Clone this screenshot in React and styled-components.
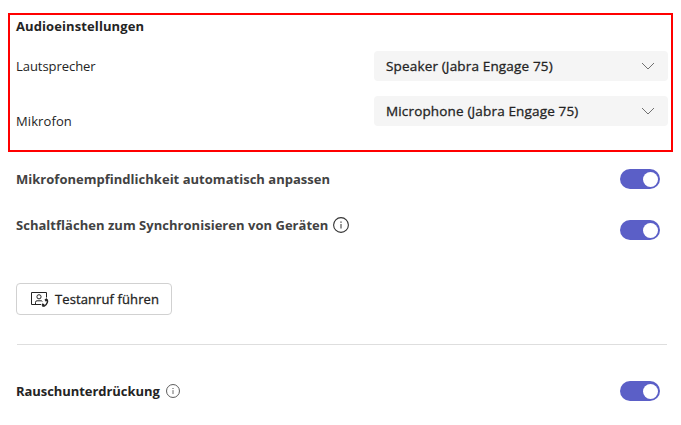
import React, { useState } from "react";
import styled, { createGlobalStyle } from "styled-components";

const GlobalStyle = createGlobalStyle`
	* {
		box-sizing: border-box;
	}
	body {
		margin: 0;
		background: #fff;
		color: #242424;
		font-family: "Open Sans", "Noto Sans", sans-serif;
		font-size: 13px;
		line-height: 20px;
	}
	button {
		font: inherit;
		color: inherit;
	}
`;

const Page = styled("main")`
	width: 681px;
	height: 425px;
	padding: 13px 8px 0;
	overflow: hidden;
`;

const AudioPanel = styled("section")`
	width: 665px;
	height: 139px;
	padding: 1px 3px 0 6px;
	border: 2px solid #f00;
`;

const Text = styled("span")`
	display: block;
	white-space: nowrap;
	font-size: ${props => props.$size || 13}px;
	font-weight: ${props => props.$weight || 400};
	color: ${props => props.$color || "#242424"};
	letter-spacing: ${props => props.$spacing || 0}px;
`;

const MediumText = styled(Text)`
	-webkit-text-stroke: 0.3px currentColor;
`;

const DeviceGrid = styled("div")`
	display: grid;
	grid-template-columns: 358px 294px;
	grid-template-rows: 30px 30px;
	row-gap: 15px;
	margin-top: 15px;
`;

const DeviceLabel = styled("div")`
	padding-top: ${props => props.$top}px;
`;

const Select = styled("button")`
	display: flex;
	align-items: center;
	justify-content: space-between;
	height: 30px;
	padding: 0 13px 0 12px;
	border: 0;
	border-radius: 4px;
	background: #f5f5f5;
`;

const SettingRow = styled("div")`
	display: flex;
	align-items: flex-start;
	justify-content: space-between;
	height: 20px;
	margin-top: ${props => props.$gap}px;
	padding: 0 13px 0 8px;
`;

const SettingName = styled("div")`
	display: flex;
	align-items: center;
	gap: ${props => props.$gap || 0}px;
	height: 20px;
	margin-top: ${props => props.$shift || 0}px;
`;

const Switch = styled("button")`
	display: flex;
	align-items: center;
	justify-content: ${props => (props.$on ? "flex-end" : "flex-start")};
	width: 40px;
	height: 20px;
	padding: 0 2px;
	border: 0;
	border-radius: 10px;
	background: ${props => (props.$on ? "#5b5fc7" : "#8a8a8a")};
`;

const Knob = styled("span")`
	width: 15px;
	height: 15px;
	border-radius: 50%;
	background: #fff;
`;

const CallButton = styled("button")`
	display: flex;
	align-items: center;
	gap: 6px;
	width: 156px;
	height: 32px;
	margin: 43px 0 0 8px;
	padding: 0 0 0 14px;
	border: 1px solid #d1d1d1;
	border-radius: 4px;
	background: #fff;
`;

const Divider = styled("hr")`
	width: 650px;
	height: 1px;
	margin: 29px 0 0 9px;
	border: 0;
	background: #dedede;
`;

const Icon = styled("svg")`
	display: block;
	flex: none;
	fill: none;
`;

const Chevron = () => (
	<Icon width="14" height="8" viewBox="0 0 14 8" stroke="#707070" strokeWidth="1">
		<path d="M1 1l6 6 6-6" />
	</Icon>
);

const InfoIcon = ({ size, color }) => (
	<Icon width={size} height={size} viewBox="0 0 16 16" stroke={color}>
		<circle cx="8" cy="8" r="7.4" strokeWidth="1.1" />
		<path d="M8 7v4.5" />
		<path d="M8 4.5v1.2" strokeWidth="1.2" />
	</Icon>
);

const TestCallIcon = () => (
	<Icon width="18" height="17" viewBox="0 0 18 17" stroke="#242424">
		<path d="M10 13.5H.5v-12h15v5" />
		<circle cx="8" cy="5.8" r="2.1" />
		<path d="M4.5 13.3v-2q0-1.5 1.5-1.5h4q1 0 1.4.7" />
		<path d="M15 8q2.2 1 1.3 3.5-.9 2.6-3 3.5-1.2.4-1.8-.5" strokeWidth="1.4" />
		<path d="M14.4 8l1.4 2M11 13.2l2 1.3" strokeWidth="2.2" />
	</Icon>
);

const Toggle = ({ label }) => {
	const [on, setOn] = useState(true);
	return (
		<Switch $on={on} role="switch" aria-checked={on} aria-label={label} onClick={() => setOn(!on)}>
			<Knob />
		</Switch>
	);
};

const App = () => (
	<Page>
		<GlobalStyle />
		<AudioPanel>
			<Text $weight={700} $spacing={0.1}>Audioeinstellungen</Text>
			<DeviceGrid>
				<DeviceLabel $top={5}>
					<Text $spacing={-0.05}>Lautsprecher</Text>
				</DeviceLabel>
				<Select>
					<MediumText $size={13.5} $spacing={0.16}>Speaker (Jabra Engage 75)</MediumText>
					<Chevron />
				</Select>
				<DeviceLabel $top={15}>
					<Text $spacing={0.1}>Mikrofon</Text>
				</DeviceLabel>
				<Select>
					<MediumText $size={13.5} $spacing={0.16}>Microphone (Jabra Engage 75)</MediumText>
					<Chevron />
				</Select>
			</DeviceGrid>
		</AudioPanel>
		<SettingRow $gap={17}>
			<SettingName>
				<Text $weight={700} $color="#424242" $spacing={0.02}>Mikrofonempfindlichkeit automatisch anpassen</Text>
			</SettingName>
			<Toggle label="Mikrofonempfindlichkeit" />
		</SettingRow>
		<SettingRow $gap={31}>
			<SettingName $gap={5} $shift={-5}>
				<Text $weight={700} $color="#424242" $spacing={0.03}>Schaltflächen zum Synchronisieren von Geräten</Text>
				<InfoIcon size={16} color="#333" />
			</SettingName>
			<Toggle label="Synchronisieren" />
		</SettingRow>
		<CallButton>
			<TestCallIcon />
			<MediumText $spacing={0.1}>Testanruf führen</MediumText>
		</CallButton>
		<Divider />
		<SettingRow $gap={36}>
			<SettingName $gap={6}>
				<Text $weight={700} $spacing={-0.06}>Rauschunterdrückung</Text>
				<InfoIcon size={14} color="#555" />
			</SettingName>
			<Toggle label="Rauschunterdrückung" />
		</SettingRow>
	</Page>
);

export default App;
